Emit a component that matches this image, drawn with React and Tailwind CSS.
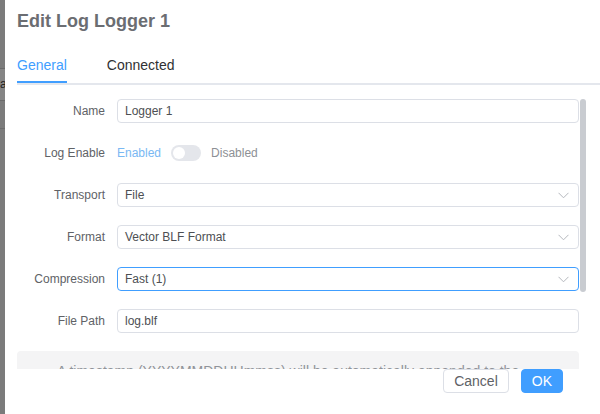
import React from 'react';

const Chevron = () => (
    <svg width="11" height="7" viewBox="0 0 11 7" fill="none" className="shrink-0">
        <path d="M0.5 0.8 L5.5 5.8 L10.5 0.8" stroke="#b4b7bd" strokeWidth="1" />
    </svg>
);

function Row({ label, children }) {
    return (
        <div className="flex items-center h-6 mb-[18px]">
            <div className="w-[100px] shrink-0 pr-3 text-right text-[12px] text-[#606266]">{label}</div>
            <div className="flex-1 flex items-center h-6">{children}</div>
        </div>
    );
}

function TextInput({ value }) {
    return (
        <div className="w-full h-6 border border-[#dcdfe6] rounded-[4px] px-[7px] flex items-center text-[12px] text-[#4d4f53]">
            {value}
        </div>
    );
}

function SelectInput({ value, focused }) {
    return (
        <div className={`w-full h-6 border rounded-[4px] pl-[7px] pr-[9px] flex items-center justify-between text-[12px] text-[#4d4f53] ${focused ? 'border-[#409eff]' : 'border-[#dcdfe6]'}`}>
            <span>{value}</span>
            <Chevron />
        </div>
    );
}

export default function App() {
    return (
        <div className="w-[600px] h-[414px] flex overflow-hidden bg-white" style={{ fontFamily: '"Liberation Sans", Arial, sans-serif' }}>
            {/* backdrop peeking at the left */}
            <div className="w-[5px] shrink-0 flex flex-col bg-[#7b7b7b] overflow-hidden">
                <div className="h-[68px]" />
                <div className="h-px bg-[#6a6a6a]" />
                <div className="h-[31px] bg-[#858585] text-[12px] leading-[31px] text-[#222]">a</div>
                <div className="h-px bg-[#6a6a6a]" />
                <div className="h-[27px]" />
                <div className="h-px bg-[#6d6d6d]" />
            </div>

            <div className="flex-1 flex flex-col bg-white">
                <div className="pl-3 pt-3">
                    <h2 className="text-[18px] leading-[18px] font-bold text-[#6b6d72]">Edit Log Logger 1</h2>
                </div>

                <div className="ml-3 mt-[15px] flex border-b-2 border-[#e4e7ed] text-[14px]">
                    <div className="h-[38px] leading-[40px] text-[#409eff] border-b-2 border-[#409eff] -mb-[2px] mr-10">
                        General
                    </div>
                    <div className="h-[38px] leading-[40px] text-[#303133]">Connected</div>
                </div>

                <div className="relative h-[284px] overflow-hidden pl-3 pr-[21px] pt-[14px]">
                    <Row label="Name"><TextInput value="Logger 1" /></Row>
                    <Row label="Log Enable">
                        <span className="text-[12px] text-[#79b8f3]">Enabled</span>
                        <span className="ml-[10px] w-[30px] h-4 rounded-full bg-[#e4e6eb] flex items-center px-[2px]">
                            <span className="w-3 h-3 rounded-full bg-white" />
                        </span>
                        <span className="ml-[10px] text-[12px] text-[#8d9095]">Disabled</span>
                    </Row>
                    <Row label="Transport"><SelectInput value="File" /></Row>
                    <Row label="Format"><SelectInput value="Vector BLF Format" /></Row>
                    <Row label="Compression"><SelectInput value="Fast (1)" focused /></Row>
                    <Row label="File Path"><TextInput value="log.blf" /></Row>
                    <div className="bg-[#f4f4f5] rounded-[4px] pl-10 pr-10 pt-[10px] pb-3 text-[14px] leading-5 text-[#909399]">
                        A timestamp (YYYYMMDDHHmmss) will be automatically appended to the file name when logging starts.
                    </div>

                    {/* overlay scrollbar */}
                    <div className="absolute left-[575px] top-[14px] w-[6px] h-[193px] rounded-full bg-[#c9ccd1]" />
                </div>

                <div className="flex justify-end gap-3 pr-[37px]">
                    <button className="h-6 px-[10px] border border-[#dcdfe6] rounded-[4px] text-[14px] text-[#606266] bg-white">Cancel</button>
                    <button className="h-6 px-[10px] border border-[#409eff] rounded-[4px] text-[14px] text-white bg-[#409eff]">OK</button>
                </div>
            </div>
        </div>
    );
}
